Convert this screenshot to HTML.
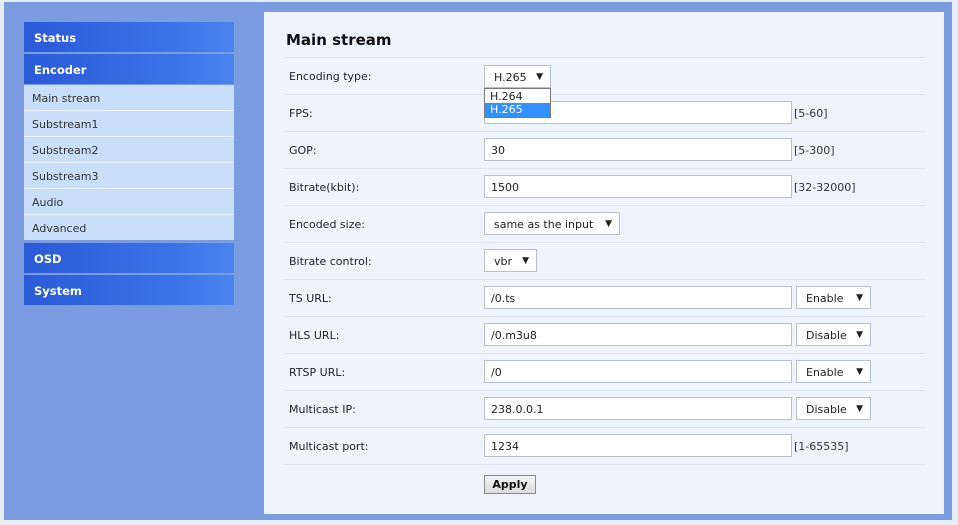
<!DOCTYPE html>
<html><head><meta charset="utf-8"><style>
*{margin:0;padding:0;box-sizing:border-box}
body{width:958px;height:525px;background:#e8eef8;position:relative;overflow:hidden;font-family:"DejaVu Sans","Liberation Sans",sans-serif;font-size:11px;color:#222}
.frame{position:absolute;left:4px;top:2px;width:948px;height:518px;background:#7b9ce0}
.hd{position:absolute;left:24px;width:210px;height:30px;background:linear-gradient(90deg,#2a5ad8,#3a72e8 70%,#4a84ee);color:#fff;font-weight:bold;font-size:11.5px;padding-left:10px;line-height:32px}
.it{position:absolute;left:24px;width:210px;height:25px;background:#c9def8;color:#333;padding-left:8px;line-height:27px}
.sep{position:absolute;left:24px;width:210px;height:1px;background:#eef4fd}
.panel{position:absolute;left:264px;top:12px;width:680px;height:502px;background:#eef3fc}
h1{position:absolute;left:286px;top:31px;font-size:15px;font-weight:bold;color:#111}
.ln{position:absolute;left:284px;width:641px;height:1px;background:#dfe6f2}
.lb{position:absolute;left:289px;height:14px;line-height:16px}
.in{position:absolute;left:484px;width:308px;height:23px;background:#fff;border:1px solid #b8c0cc;padding-left:6px;line-height:23px}
.sel{position:absolute;height:23px;background:#fff;border:1px solid #b8c0cc;padding-left:9px;line-height:23px}
.sel b{position:absolute;right:7px;top:1px;font-size:9px;font-weight:normal;line-height:20px}
.rg{position:absolute;left:794px;color:#333;line-height:16px}
</style></head><body>
<div class="frame"></div>
<div class="hd" style="top:22px">Status</div>
<div class="hd" style="top:54px">Encoder</div>
<div class="it" style="top:85px">Main stream</div>
<div class="it" style="top:111px">Substream1</div>
<div class="it" style="top:137px">Substream2</div>
<div class="it" style="top:163px">Substream3</div>
<div class="it" style="top:189px">Audio</div>
<div class="it" style="top:215px">Advanced</div>
<div class="sep" style="top:110px"></div><div class="sep" style="top:136px"></div><div class="sep" style="top:162px"></div><div class="sep" style="top:188px"></div><div class="sep" style="top:214px"></div>
<div class="hd" style="top:243px">OSD</div>
<div class="hd" style="top:275px">System</div>
<div class="panel"></div>
<h1>Main stream</h1>
<div class="ln" style="top:57px"></div>
<div class="ln" style="top:94px"></div>
<div class="ln" style="top:131px"></div>
<div class="ln" style="top:168px"></div>
<div class="ln" style="top:205px"></div>
<div class="ln" style="top:242px"></div>
<div class="ln" style="top:279px"></div>
<div class="ln" style="top:316px"></div>
<div class="ln" style="top:353px"></div>
<div class="ln" style="top:390px"></div>
<div class="ln" style="top:427px"></div>
<div class="ln" style="top:464px"></div>

<div class="lb" style="top:69px">Encoding type:</div>
<div class="lb" style="top:106px">FPS:</div>
<div class="lb" style="top:143px">GOP:</div>
<div class="lb" style="top:180px">Bitrate(kbit):</div>
<div class="lb" style="top:217px">Encoded size:</div>
<div class="lb" style="top:254px">Bitrate control:</div>
<div class="lb" style="top:291px">TS URL:</div>
<div class="lb" style="top:328px">HLS URL:</div>
<div class="lb" style="top:365px">RTSP URL:</div>
<div class="lb" style="top:402px">Multicast IP:</div>
<div class="lb" style="top:439px">Multicast port:</div>

<div class="sel" style="left:484px;top:65px;width:67px">H.265<b>▼</b></div>
<div class="in" style="top:101px"></div><div class="rg" style="top:106px">[5-60]</div>
<div class="in" style="top:138px">30</div><div class="rg" style="top:143px">[5-300]</div>
<div class="in" style="top:175px">1500</div><div class="rg" style="top:180px">[32-32000]</div>
<div class="sel" style="left:484px;top:212px;width:136px">same as the input<b>▼</b></div>
<div class="sel" style="left:484px;top:249px;width:53px">vbr<b>▼</b></div>
<div class="in" style="top:286px">/0.ts</div><div class="sel" style="left:796px;top:286px;width:75px">Enable<b>▼</b></div>
<div class="in" style="top:323px">/0.m3u8</div><div class="sel" style="left:796px;top:323px;width:75px">Disable<b>▼</b></div>
<div class="in" style="top:360px">/0</div><div class="sel" style="left:796px;top:360px;width:75px">Enable<b>▼</b></div>
<div class="in" style="top:397px">238.0.0.1</div><div class="sel" style="left:796px;top:397px;width:75px">Disable<b>▼</b></div>
<div class="in" style="top:434px">1234</div><div class="rg" style="top:439px">[1-65535]</div>

<div style="position:absolute;left:484px;top:88px;width:67px;height:30px;background:#fff;border:1px solid #7a7a7a">
<div style="height:14px;line-height:15px;padding-left:5px">H.264</div>
<div style="height:14px;line-height:14px;padding-left:5px;background:#3390ff;color:#fff">H.265</div>
</div>

<div style="position:absolute;left:484px;top:475px;width:52px;height:19px;background:linear-gradient(#f4f4f4,#dcdcdc);border:1px solid #8a8a8a;font-weight:bold;text-align:center;line-height:18px;color:#111">Apply</div>
</body></html>
